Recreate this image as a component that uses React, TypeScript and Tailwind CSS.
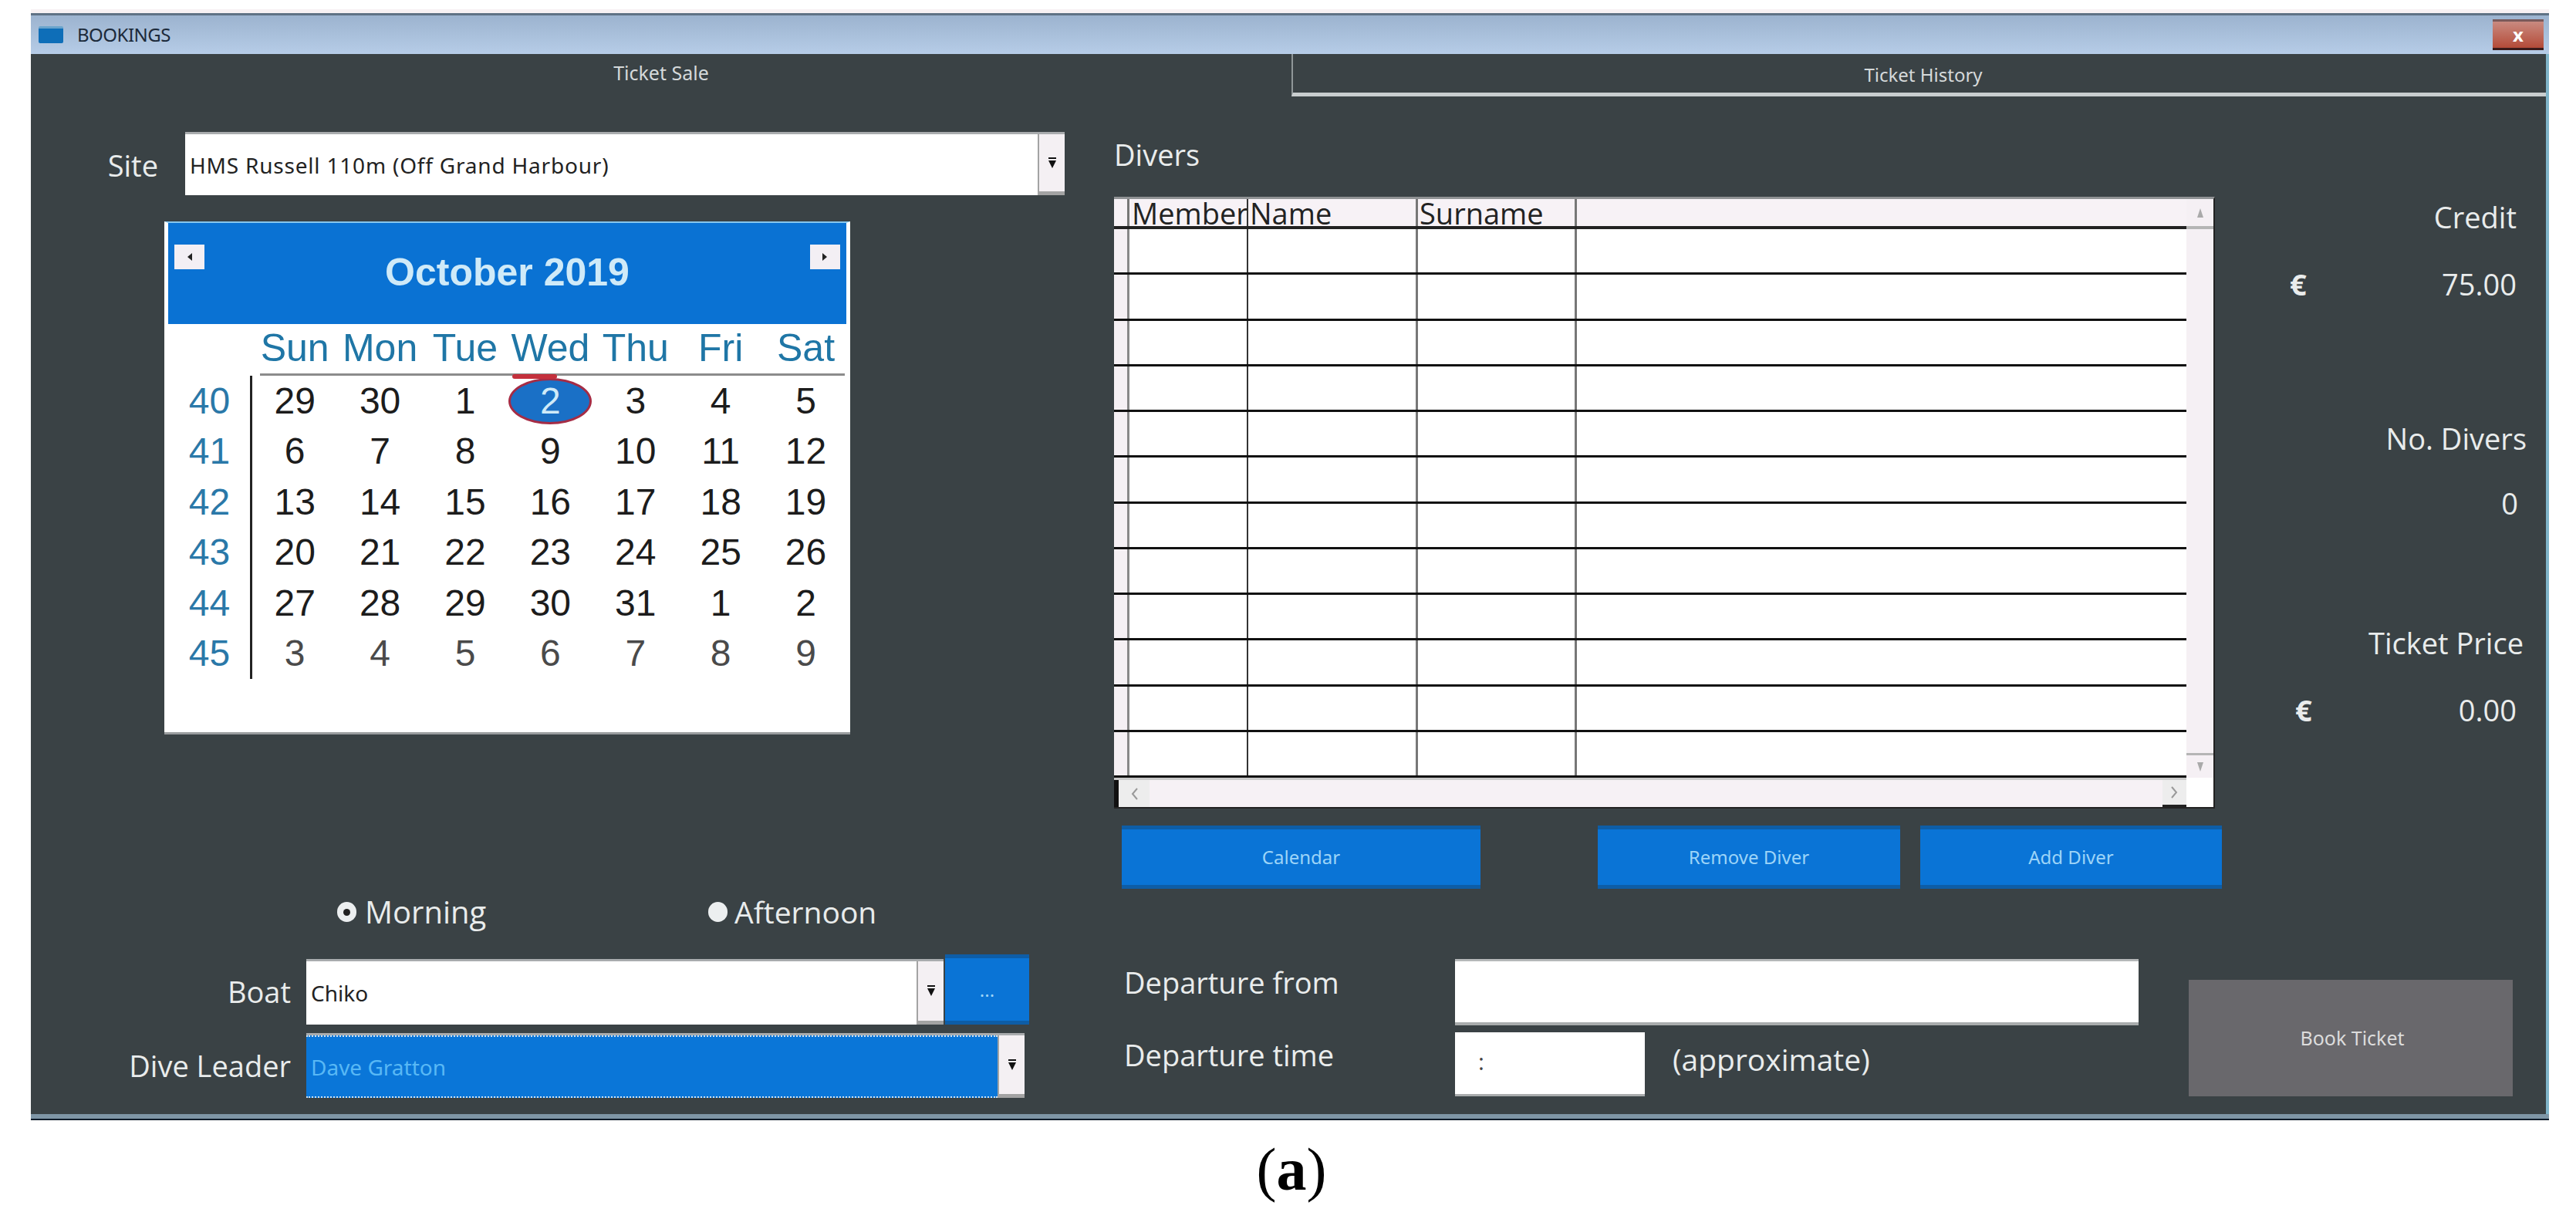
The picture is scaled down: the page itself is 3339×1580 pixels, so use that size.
const weeks = [
  { no: 40, days: ["29", "30", "1", "2", "3", "4", "5"] },
  { no: 41, days: ["6", "7", "8", "9", "10", "11", "12"] },
  { no: 42, days: ["13", "14", "15", "16", "17", "18", "19"] },
  { no: 43, days: ["20", "21", "22", "23", "24", "25", "26"] },
  { no: 44, days: ["27", "28", "29", "30", "31", "1", "2"] },
  { no: 45, days: ["3", "4", "5", "6", "7", "8", "9"] },
];

const weekDays = ["Sun", "Mon", "Tue", "Wed", "Thu", "Fri", "Sat"];
const rows = Array.from({ length: 12 }, (_, i) => i);

const DropArrow = () => (
  <svg width="12" height="16" viewBox="0 0 12 16" className="shrink-0">
    <path d="M1 1h10v2H1zM1 5h10L6 15z" fill="#111" />
  </svg>
);

const ComboBox = ({ text, width, height, selected, wide }: { text: string; width: string; height: string; selected?: boolean; wide?: boolean }) => (
  <div className={`flex ${width} ${height} border-t-[3px] border-[#a9acae] bg-white`}>
    <div
      className={`flex flex-1 items-center pl-[6px] font-['Noto_Sans',sans-serif] text-[28px] ${wide ? "tracking-[0.8px]" : ""} ${
        selected ? "border-y-2 border-dotted border-[#cfe3f3] bg-[#0a76d8] text-[#58b8f5]" : "text-[#222]"
      }`}
    >
      {text}
    </div>
    <div className="flex w-[35px] items-center justify-center border-b-[5px] border-l-2 border-[#a3a3a3] bg-[#f4f0f3]">
      <DropArrow />
    </div>
  </div>
);

const BlueButton = ({ label, className }: { label: string; className: string }) => (
  <button className={`flex items-center justify-center border-y-[5px] border-[#0e5da6] bg-[#0a74d6] font-['Noto_Sans',sans-serif] text-[24px] text-[#9dd4f8] ${className}`}>
    {label}
  </button>
);

const Label = ({ children, className = "" }: { children: React.ReactNode; className?: string }) => (
  <div className={`h-[40px] leading-[40px] text-[#e9ecec] ${className || ""} ${className.includes("text-[") ? "" : "text-[38px]"}`}>{children}</div>
);

const NavButton = ({ dir }: { dir: "left" | "right" }) => (
  <div className="flex h-[32px] w-[39px] items-center justify-center bg-[#f3eff4]">
    <svg width="8" height="12" viewBox="0 0 8 12">
      <path d={dir === "left" ? "M7 1v10L1 6z" : "M1 1v10l6-5z"} fill="#222" />
    </svg>
  </div>
);

const Calendar = () => (
  <div className="ml-[173px] h-[665px] w-[889px] border-b-[3px] border-[#9a9d9f] bg-white font-['Liberation_Sans',sans-serif]">
    <div className="flex h-[133px] items-start justify-between border-x-[5px] border-t-2 border-x-white border-t-[#86c6ee] bg-[#0a72d3] px-[8px] pt-[28px]">
      <NavButton dir="left" />
      <div className="mt-[9px] text-[50px] leading-[54px] font-bold text-[#cfeaf8]">October 2019</div>
      <NavButton dir="right" />
    </div>
    <div className="grid grid-cols-[114px_repeat(7,110.4px)]">
      <div className="h-[64px]" />
      {weekDays.map((d) => (
        <div key={d} className="flex h-[64px] items-center justify-center pb-[2px] text-[50px] leading-none text-[#1f76a6]">
          {d}
        </div>
      ))}
    </div>
    <div className="ml-[124px] mr-[7px] h-[3px] bg-[#8c8c8c]" />
    <div className="grid grid-cols-[114px_repeat(7,110.4px)]">
      {weeks.map((w) => (
        <>
          <div key={w.no} className="flex h-[65.5px] items-center justify-center border-r-[3px] border-[#222] pl-[6px] text-[48px] text-[#2a78a8]">
            {w.no}
          </div>
          {w.days.map((d, i) => (
            <div
              key={`${w.no}-${i}`}
              className={`flex h-[65.5px] items-center justify-center text-[48px] ${w.no === 45 ? "text-[#4a4a4a]" : "text-[#1c1c1c]"}`}
            >
              {w.no === 40 && d === "2" ? (
                <span className="relative flex h-[60px] w-[108px] items-center justify-center rounded-[50%] border-[3px] border-[#a52c45] bg-[#1a70c6] text-[#cfeaf8]">
                  <span className="absolute top-[-8px] left-[2px] h-[6px] w-[58px] rounded-full bg-[#c4303c]" />
                  {d}
                </span>
              ) : (
                d
              )}
            </div>
          ))}
        </>
      ))}
    </div>
  </div>
);

const DiverTable = () => (
  <div className="flex h-[793px] w-[1427px] flex-col border-t-[3px] border-r-2 border-b-2 border-t-[#8f9294] border-r-[#222] border-b-[#222] bg-white font-['Open_Sans',sans-serif]">
    <div className="flex flex-1">
      <div className="w-[1390px]">
        <div className="flex h-[39px] border-b-[4px] border-[#222] bg-[#f7f2f6] text-[38px] leading-[36px] text-[#222]">
          <div className="w-[20px] border-r-[3px] border-[#777]" />
          <div className="w-[154px] overflow-hidden border-r-2 border-[#333] pl-[3px] whitespace-nowrap">Member</div>
          <div className="w-[220px] border-r-[3px] border-[#777] pl-[2px]">Name</div>
          <div className="w-[206px] border-r-[3px] border-[#777] pl-[2px]">Surname</div>
        </div>
        {rows.map((r) => (
          <div key={r} className="flex h-[59.25px] border-b-[3px] border-[#111]">
            <div className="w-[20px] border-r-[3px] border-[#888] bg-[#f5f0f4]" />
            <div className="w-[154px] border-r-2 border-[#333]" />
            <div className="w-[220px] border-r-[3px] border-[#777]" />
            <div className="w-[206px] border-r-[3px] border-[#777]" />
          </div>
        ))}
      </div>
      <div className="flex flex-1 flex-col justify-between bg-[#f5f0f4]">
        <div className="flex h-[39px] items-center justify-center border-b-[4px] border-[#b5b5b5]">
          <svg width="10" height="14" viewBox="0 0 10 14">
            <path d="M5 1l4 12H1z" fill="#aaa" />
          </svg>
        </div>
        <div className="flex h-[32px] items-center justify-center border-t-[3px] border-[#b5b5b5]">
          <svg width="10" height="14" viewBox="0 0 10 14">
            <path d="M5 13L9 1H1z" fill="#aaa" />
          </svg>
        </div>
      </div>
    </div>
    <div className="flex h-[38px]">
      <div className="flex w-[1390px] border-t-[3px] border-[#c9c9c9] bg-[#f6f1f5]">
        <div className="flex w-[46px] items-center justify-center border-l-[6px] border-[#111] bg-[#ededed]">
          <svg width="9" height="16" viewBox="0 0 9 16">
            <path d="M8 1L2 8l6 7" fill="none" stroke="#999" strokeWidth="2" />
          </svg>
        </div>
        <div className="flex-1" />
        <div className="flex w-[31px] items-center justify-center border-b-[3px] border-[#222] bg-[#ededed]">
          <svg width="9" height="16" viewBox="0 0 9 16">
            <path d="M1 1l6 7-6 7" fill="none" stroke="#999" strokeWidth="2" />
          </svg>
        </div>
      </div>
      <div className="flex-1 bg-white" />
    </div>
  </div>
);

const RadioDot = ({ checked }: { checked?: boolean }) => (
  <span className="flex h-[26px] w-[25px] items-center justify-center rounded-full bg-[#eceff0]">
    {checked && <span className="h-[9px] w-[9px] rounded-full bg-[#222]" />}
  </span>
);

const App = () => {
  return (
    <div className="h-[1580px] w-[3339px] overflow-hidden bg-white pt-[12px] pl-[40px] font-['Open_Sans',sans-serif]">
      <div className="w-[3264px]">
        <div className="h-[5px] bg-[#f7f1f3]" />
        <div className="flex h-[53px] items-center justify-between border-t-[3px] border-[#5f7285] bg-gradient-to-b from-[#9cb3cf] to-[#b6cce7] pr-[7px] pl-[10px]">
          <div className="flex items-center gap-[18px]">
            <div className="h-[22px] w-[32px] rounded-[2px] border-t-[3px] border-[#6aa4cc] bg-[#0e6eb8]" />
            <span className="font-['Noto_Sans',sans-serif] text-[24px] tracking-[-0.5px] text-[#1c2a3a]">BOOKINGS</span>
          </div>
          <div className="flex h-[40px] w-[66px] items-center justify-center border-t-[3px] border-b-[3px] border-t-[#7a5a5a] border-b-[#3a1a1a] bg-gradient-to-b from-[#c98a80] to-[#b34a38] text-[24px] leading-none font-bold text-white">
            x
          </div>
        </div>

        <div className="border-r-[4px] border-[#7fb4c9] bg-[#3a4245]">
          <div className="flex h-[55px] font-['Noto_Sans',sans-serif] text-[25px] text-[#d5d9da]">
            <div className="flex w-[1634px] items-center justify-center pb-[5px]">Ticket Sale</div>
            <div className="flex flex-1 items-center justify-center border-b-[5px] border-l-2 border-b-[#c9cecf] border-l-[#8f9698] pt-[4px] pl-[10px] text-[24px]">
              Ticket History
            </div>
          </div>

          <div className="flex h-[1319px]">
            <div className="w-[1404px]">
              <div className="flex items-center pt-[46px]">
                <Label className="mt-[4px] w-[165px] text-right">Site</Label>
                <div className="ml-[35px]">
                  <ComboBox text="HMS Russell 110m (Off Grand Harbour)" width="w-[1140px]" height="h-[82px]" wide />
                </div>
              </div>
              <div className="mt-[34px]">
                <Calendar />
              </div>
              <div className="mt-[210px] flex pl-[397px]">
                <div className="flex w-[481px] items-center gap-[11px]">
                  <RadioDot checked />
                  <Label className="text-[40px]">Morning</Label>
                </div>
                <div className="flex items-center gap-[9px]">
                  <RadioDot />
                  <Label className="text-[39px]">Afternoon</Label>
                </div>
              </div>
              <div className="mt-[40px] flex items-center">
                <Label className="w-[337px] text-right">Boat</Label>
                <div className="ml-[20px]">
                  <ComboBox text="Chiko" width="w-[826px]" height="h-[85px]" />
                </div>
                <BlueButton label="..." className="mt-[-5px] ml-[2px] h-[91px] w-[109px]" />
              </div>
              <div className="mt-[11px] flex items-center">
                <Label className="w-[337px] text-right">Dive Leader</Label>
                <div className="ml-[20px]">
                  <ComboBox text="Dave Gratton" width="w-[931px]" height="h-[84px]" selected />
                </div>
              </div>
            </div>

            <div className="flex-1">
              <div className="flex h-[1025px]">
                <div className="w-[1436px] pt-[55px]">
                  <Label>Divers</Label>
                  <div className="mt-[35px]">
                    <DiverTable />
                  </div>
                  <div className="mt-[22px] flex pl-[10px]">
                    <BlueButton label="Calendar" className="h-[82px] w-[465px]" />
                    <BlueButton label="Remove Diver" className="ml-[152px] h-[82px] w-[392px]" />
                    <BlueButton label="Add Diver" className="ml-[26px] h-[82px] w-[391px]" />
                  </div>
                </div>
                <div className="flex flex-1 flex-col pt-[136px]">
                  <Label className="pr-[38px] text-right">Credit</Label>
                  <div className="mt-[47px] flex justify-between pr-[38px] pl-[88px]">
                    <Label className="font-bold">€</Label>
                    <Label>75.00</Label>
                  </div>
                  <Label className="mt-[160px] pr-[25px] text-right">No. Divers</Label>
                  <Label className="mt-[44px] pr-[36px] text-right">0</Label>
                  <Label className="mt-[141px] pr-[29px] text-right">Ticket Price</Label>
                  <div className="mt-[47px] flex justify-between pr-[38px] pl-[95px]">
                    <Label className="font-bold">€</Label>
                    <Label>0.00</Label>
                  </div>
                </div>
              </div>

              <div className="flex pt-[93px]">
                <div className="w-[1393px] pl-[13px]">
                  <div className="flex">
                    <Label className="mt-[10px] w-[429px]">Departure from</Label>
                    <div className="h-[86px] w-[886px] border-t-[3px] border-b-[4px] border-t-[#b5b8b9] border-b-[#a9acad] bg-white" />
                  </div>
                  <div className="mt-[9px] flex">
                    <Label className="mt-[9px] w-[429px]">Departure time</Label>
                    <div className="flex h-[83px] w-[246px] items-center border-b-[3px] border-[#a9acad] bg-white pb-[6px] pl-[30px] text-[30px] text-[#444]">
                      :
                    </div>
                    <Label className="mt-[15px] ml-[36px] text-[39px]">(approximate)</Label>
                  </div>
                </div>
                <button className="mt-[27px] flex h-[151px] w-[420px] items-center justify-center bg-[#69686c] pl-[4px] font-['Noto_Sans',sans-serif] text-[25px] text-[#dcdcdc]">
                  Book Ticket
                </button>
              </div>
            </div>
          </div>
        </div>
        <div className="h-[6px] bg-[#7f96a6]" />
        <div className="h-[2px] bg-[#0f1c2a]" />

        <div className="mt-[24px] pl-[4px] text-center font-['Liberation_Serif',serif] text-[78px] leading-[80px] text-black">
          (<span className="font-bold">a</span>)
        </div>
      </div>
    </div>
  );
};

export default App;
